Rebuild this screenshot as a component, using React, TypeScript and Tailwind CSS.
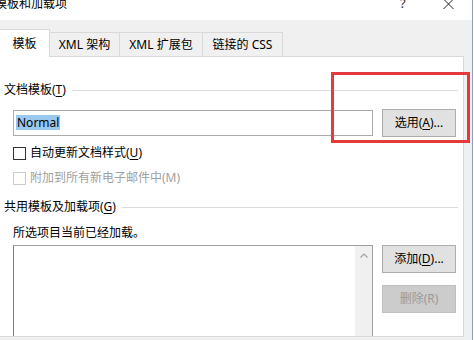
import React from "react";

const FONT = "font-['Noto_Sans','Noto_Sans_CJK_SC',sans-serif]";

function Tab({ label, active, width }: { label: string; active?: boolean; width: string }) {
  return (
    <div
      className={
        active
          ? `${width} h-[28px] -mb-px bg-white border border-[#d9d9d9] border-b-0 border-l-0 flex items-center justify-center relative z-10`
          : `${width} h-[24px] bg-[#f0f0f0] border border-[#d9d9d9] border-l-0 border-b-0 flex items-center justify-center`
      }
    >
      <span className="text-[12px] leading-none text-black whitespace-nowrap">{label}</span>
    </div>
  );
}

function WinButton({ children, disabled }: { children: React.ReactNode; disabled?: boolean }) {
  return (
    <div
      className={
        disabled
          ? "w-[74px] h-[28px] bg-[#cccccc] border border-[#bfbfbf] text-[#9a9a9a] text-[12px] flex items-center justify-center"
          : "w-[74px] h-[28px] bg-[#e1e1e1] border border-[#adadad] text-black text-[12px] flex items-center justify-center"
      }
    >
      {children}
    </div>
  );
}

function Heading({ children }: { children: React.ReactNode }) {
  return (
    <div className="h-[16px] flex items-center pl-[4px] pr-[5px]">
      <span className="text-[12px] text-black whitespace-nowrap leading-none">{children}</span>
      <div className="flex-1 h-px bg-[#dcdcdc] ml-[6px]" />
    </div>
  );
}

export default function App() {
  return (
    <div className={`w-[474px] h-[340px] overflow-hidden relative bg-white flex ${FONT}`}>
      {/* Dialog window */}
      <div className="w-[472px] h-full flex flex-col">
        {/* Title bar */}
        <div className="h-[20px] shrink-0 bg-white flex items-start relative">
          <span className="text-[12px] leading-none text-black -ml-[5px] -mt-[2px] whitespace-nowrap">模板和加载项</span>
          <span className="absolute left-[400px] -top-[3px] text-[13px] leading-none text-[#333]">?</span>
          <svg className="absolute left-[443px] -top-[1px]" width="11" height="10" viewBox="0 0 11 10">
            <path d="M0.5 0 L10.5 10 M10.5 0 L0.5 10" stroke="#222" strokeWidth="1" fill="none" />
          </svg>
        </div>

        {/* Body */}
        <div className="flex-1 bg-[#f0f0f0] pr-[8px]">
          {/* Tab strip */}
          <div className="h-[36px] flex items-end">
            <Tab label="模板" active width="w-[50px]" />
            <Tab label="XML 架构" width="w-[70px]" />
            <Tab label="XML 扩展包" width="w-[83px]" />
            <Tab label="链接的 CSS" width="w-[80px]" />
          </div>

          {/* Tab panel */}
          <div className="h-[281px] bg-white border border-[#d9d9d9] border-l-0 overflow-hidden">
            <div className="mt-[25px]">
              <Heading>
                文档模板(<span className="underline underline-offset-2">T</span>)
              </Heading>
            </div>

            <div className="mt-[10px] h-[29px] flex items-center pl-[13px]">
              <div className="w-[360px] h-[26px] border border-[#ababab] flex items-center pl-[2px]">
                <span className="bg-[#99c9ef] text-[12px] leading-[15px] px-[1px] text-black">Normal</span>
              </div>
              <div className="ml-[9px]">
                <WinButton>
                  选用(<span className="underline underline-offset-2">A</span>)...
                </WinButton>
              </div>
            </div>

            <div className="mt-[8px] h-[16px] flex items-center pl-[13px]">
              <div className="w-[13px] h-[13px] border border-[#333] bg-white" />
              <span className="ml-[4px] text-[12px] leading-none text-black">
                自动更新文档样式(<span className="underline underline-offset-2">U</span>)
              </span>
            </div>

            <div className="mt-[9px] h-[16px] flex items-center pl-[13px]">
              <div className="w-[13px] h-[13px] border border-[#cccccc] bg-white" />
              <span className="ml-[4px] text-[12px] leading-none text-[#a0a0a0]">附加到所有新电子邮件中(M)</span>
            </div>

            <div className="mt-[13px]">
              <Heading>
                共用模板及加载项(<span className="underline underline-offset-2">G</span>)
              </Heading>
            </div>

            <div className="mt-[10px] h-[16px] flex items-center pl-[13px]">
              <span className="text-[12px] leading-none text-black">所选项目当前已经加载。</span>
            </div>

            <div className="mt-[4px] flex items-start pl-[13px]">
              <div className="w-[360px] h-[100px] shrink-0 border border-[#a0a0a0] border-l-[#7e7e7e] flex justify-end">
                <div className="w-[17px] h-full bg-[#f0f0f0] flex justify-center pt-[7px]">
                  <svg width="8" height="5" viewBox="0 0 8 5">
                    <path d="M0.5 4.5 L4 1 L7.5 4.5" stroke="#a3a3a3" strokeWidth="1.2" fill="none" />
                  </svg>
                </div>
              </div>
              <div className="ml-[9px] flex flex-col gap-[12px]">
                <WinButton>
                  添加(<span className="underline underline-offset-2">D</span>)...
                </WinButton>
                <WinButton disabled>删除(R)</WinButton>
              </div>
            </div>
          </div>
        </div>
      </div>

      {/* Window border */}
      <div className="w-[1px] h-full bg-[#8fa3b8]" />
      <div className="flex-1 h-full bg-white" />

      {/* Red highlight box */}
      <div className="absolute left-[331px] top-[72px] w-[139px] h-[71px] border-[3px] border-[#e5393e]" />
    </div>
  );
}
